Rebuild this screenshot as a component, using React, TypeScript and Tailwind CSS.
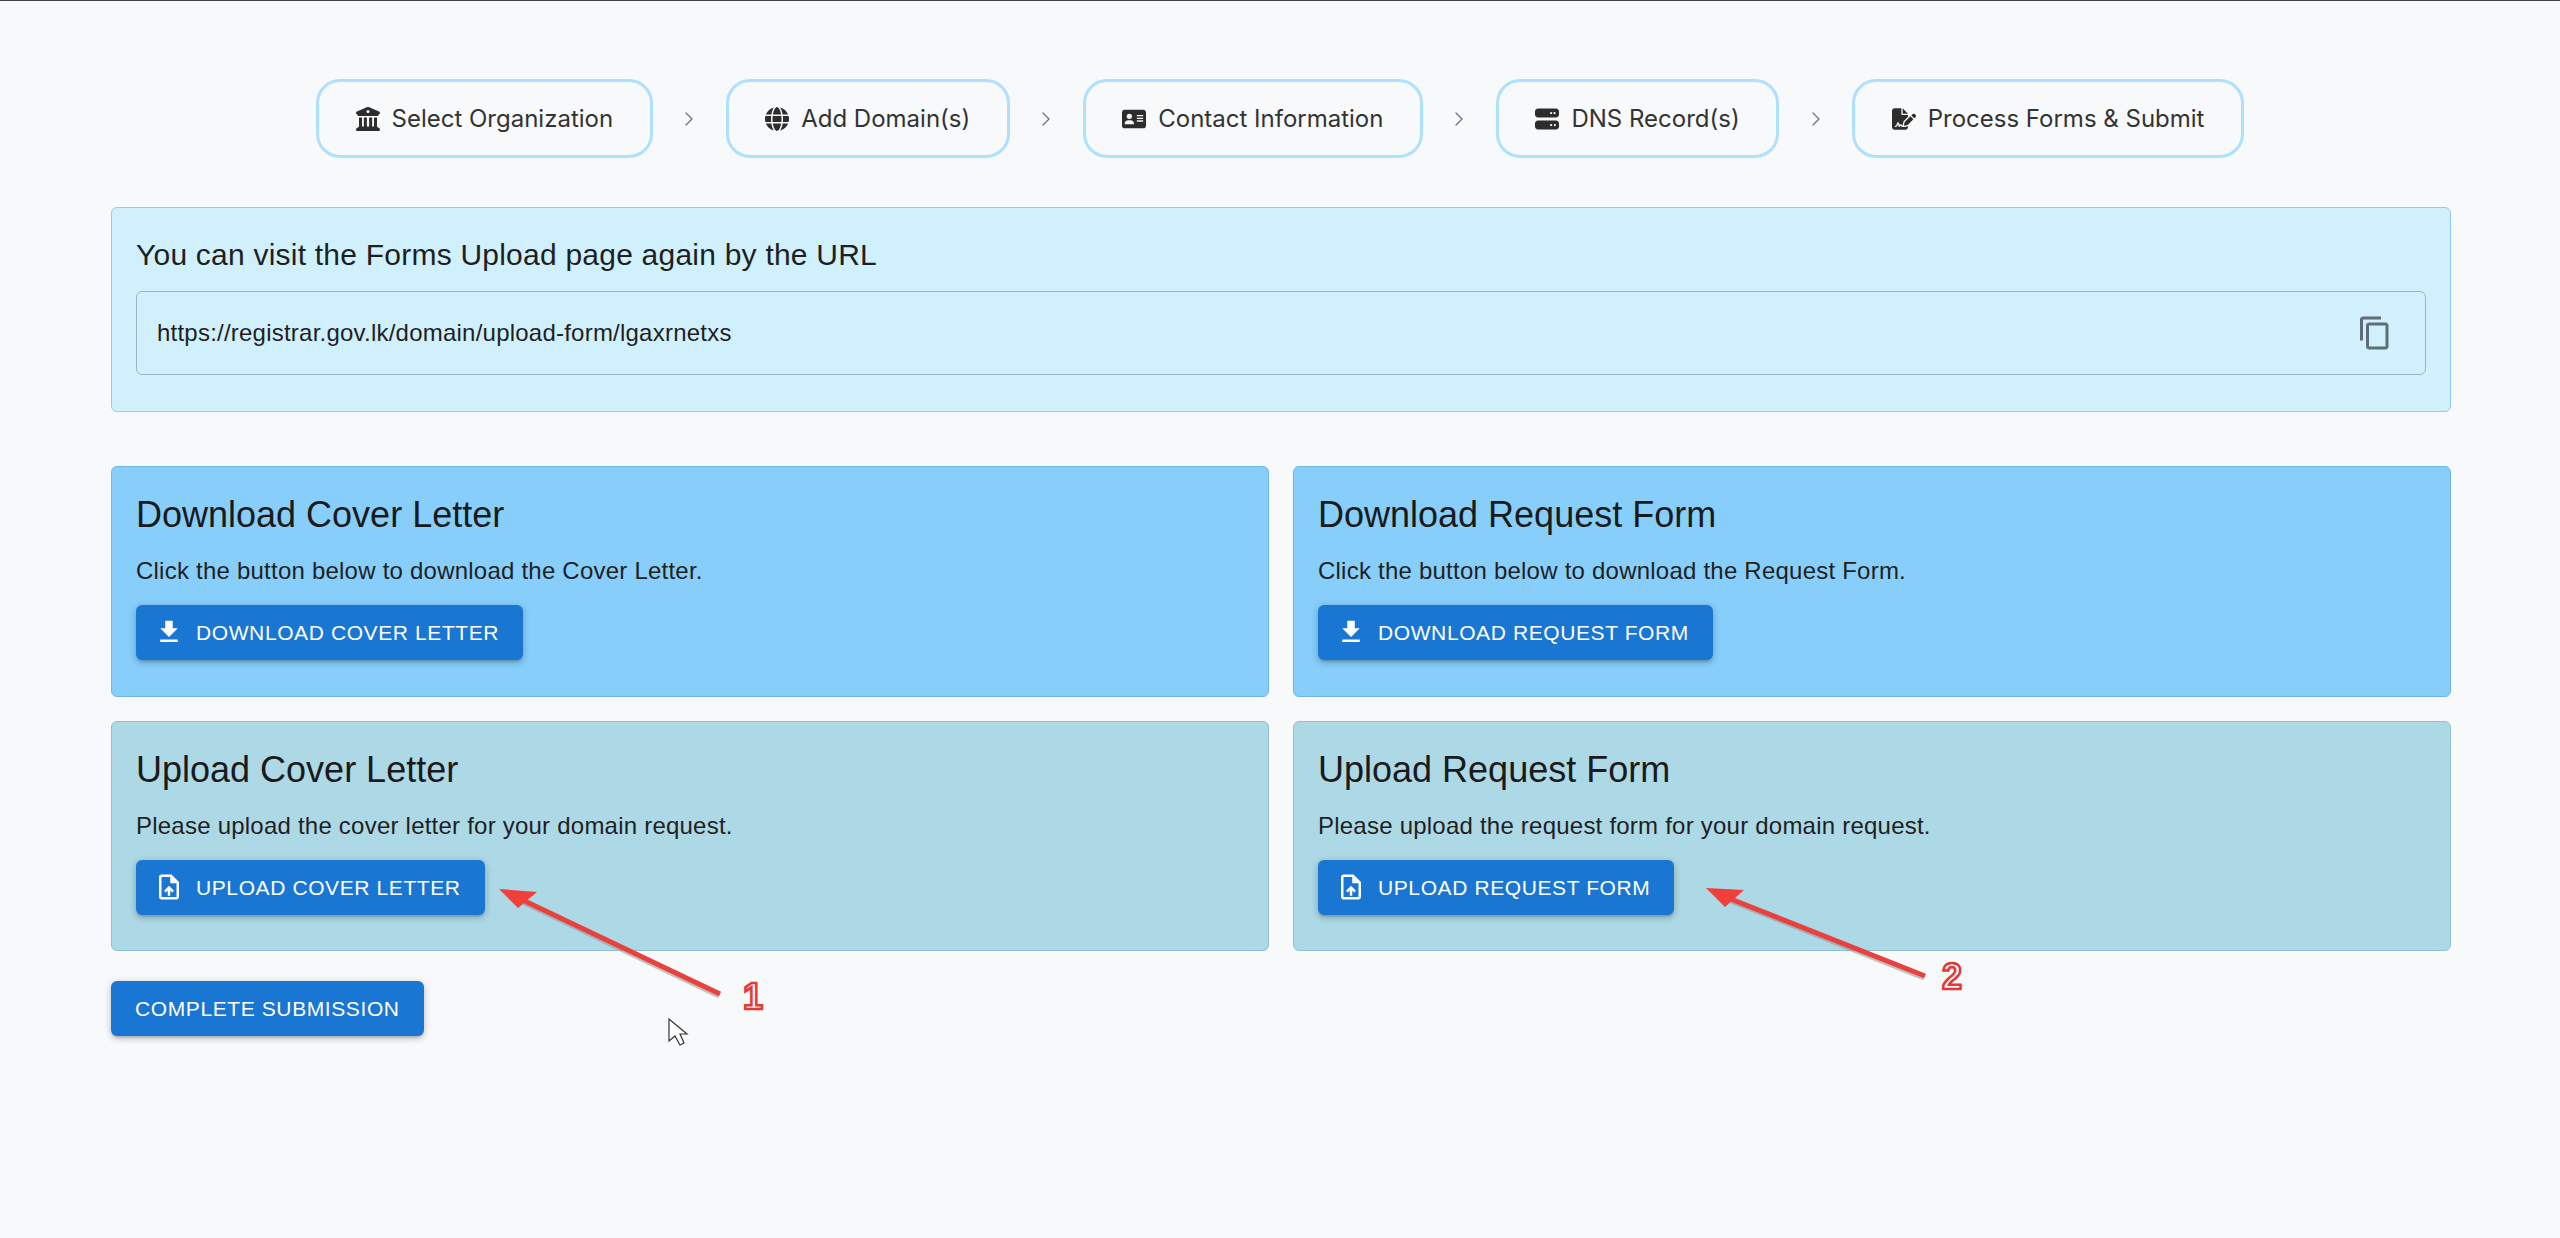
import { ChevronRight } from 'lucide-react';
import { FaAddressCard, FaBuildingColumns, FaFileSignature, FaGlobe, FaServer } from 'react-icons/fa6';
import { MdContentCopy, MdDownload, MdUploadFile } from 'react-icons/md';

const steps = [
  { name: 'Select Organization', icon: FaBuildingColumns },
  { name: 'Add Domain(s)', icon: FaGlobe },
  { name: 'Contact Information', icon: FaAddressCard },
  { name: 'DNS Record(s)', icon: FaServer },
  { name: 'Process Forms & Submit', icon: FaFileSignature },
];

const sans = "font-['Liberation_Sans',Arial,sans-serif]";

const buttonClass =
  'flex h-[54.75px] items-center rounded-[6px] bg-[#1976d2] text-[21px] tracking-[0.6px] text-white shadow-[0_3px_3px_-2px_rgba(0,0,0,0.2),0_3px_6px_0_rgba(0,0,0,0.14),0_1px_8px_0_rgba(0,0,0,0.12)]';

interface FormCardProps {
  title: string;
  text: string;
  label: string;
  tone: 'download' | 'upload';
}

const FormCard = ({ title, text, label, tone }: FormCardProps) => {
  const Icon = tone === 'download' ? MdDownload : MdUploadFile;

  return (
    <div
      className={
        tone === 'download'
          ? 'h-[231px] rounded-[6px] border border-[#6fb7e8] bg-[#87cefa] px-6 pt-6'
          : 'h-[230px] rounded-[6px] border border-[#90c0d0] bg-[#add8e6] px-6 pt-6'
      }
    >
      <h2 className="text-[36px] leading-[47px] text-[#1a1a1a]">{title}</h2>
      <p className="mt-[14px] text-[24px] leading-[38px] tracking-[0.225px] text-[#1f1f1f]">{text}</p>
      <button className={`${buttonClass} mt-[15px] pl-[18px] pr-[24px]`}>
        <Icon className="mr-[12px] h-[30px] w-[30px]" />
        {label}
      </button>
    </div>
  );
};

const Annotations = () => (
  <>
    <svg className="pointer-events-none absolute left-0 top-0" width="2560" height="1238" fill="none">
      <path d="M719 995 L510 895" stroke="#9a9a9a" strokeOpacity="0.6" strokeWidth="5" />
      <path d="M720 993 L510 893" stroke="#e8413e" strokeWidth="5" />
      <path d="M499 888 L537 891 L518 907 Z" fill="#f0403c" />
      <path d="M1924 977 L1718 895" stroke="#9a9a9a" strokeOpacity="0.6" strokeWidth="5" />
      <path d="M1925 975 L1718 893" stroke="#e8413e" strokeWidth="5" />
      <path d="M1706 887 L1744 889 L1725 906 Z" fill="#f0403c" />
      <path
        d="M669 1018 L669 1040 L675 1035 L680 1044 L684 1042 L680 1033 L687 1033 Z"
        fill="#ffffff"
        stroke="#333333"
        strokeWidth="1.2"
      />
    </svg>
    <span className="absolute left-[743px] top-[976px] text-[36px] font-bold leading-[40px] text-[#f4f6f8] [-webkit-text-stroke:2.5px_#e53935]">
      1
    </span>
    <span className="absolute left-[1942px] top-[956px] text-[36px] font-bold leading-[40px] text-[#f4f6f8] [-webkit-text-stroke:2.5px_#e53935]">
      2
    </span>
  </>
);

export default function App() {
  return (
    <div className={`relative h-[1238px] w-[2560px] overflow-hidden border-t border-[#444444] bg-[#f8f9fb] ${sans}`}>
      {/* Stepper */}
      <nav className="mt-[78px] flex items-center justify-center font-['Inter',sans-serif]">
        {steps.map((step, index) => {
          const Icon = step.icon;
          return (
            <div key={step.name} className="flex items-center">
              {index > 0 && (
                <div className="flex w-[73px] justify-center">
                  <ChevronRight className="h-[24px] w-[24px] text-[#6b7280]" strokeWidth={1.25} />
                </div>
              )}
              <div className="flex h-[79px] items-center gap-[12px] rounded-[24px] border-[3px] border-[#aee0ff] px-[36.5px] text-[24px] text-[#333333]">
                <Icon className="h-[24px] w-auto text-[#2d2d2d]" />
                <span>{step.name}</span>
              </div>
            </div>
          );
        })}
      </nav>

      <main className="ml-[111px] mr-[109px] mt-[49px]">
        {/* Revisit URL */}
        <section className="h-[205px] rounded-[6px] border border-[#90caf9] bg-[#d0f0fe] px-6 pt-6">
          <p className="text-[30px] leading-[46px] tracking-[0.225px] text-[#1f1f1f]">
            You can visit the Forms Upload page again by the URL
          </p>
          <div className="mt-[13px] flex h-[84px] items-center justify-between rounded-[6px] border border-[#9db5c2] pl-5 pr-[32px]">
            <span className="text-[24px] tracking-[0.225px] text-[#1f1f1f]">
              https://registrar.gov.lk/domain/upload-form/lgaxrnetxs
            </span>
            <MdContentCopy className="h-[36px] w-[36px] text-[#5f6d75]" />
          </div>
        </section>

        {/* Forms */}
        <section className="mt-[54px] grid grid-cols-2 gap-x-6 gap-y-6">
          <FormCard
            tone="download"
            title="Download Cover Letter"
            text="Click the button below to download the Cover Letter."
            label="DOWNLOAD COVER LETTER"
          />
          <FormCard
            tone="download"
            title="Download Request Form"
            text="Click the button below to download the Request Form."
            label="DOWNLOAD REQUEST FORM"
          />
          <FormCard
            tone="upload"
            title="Upload Cover Letter"
            text="Please upload the cover letter for your domain request."
            label="UPLOAD COVER LETTER"
          />
          <FormCard
            tone="upload"
            title="Upload Request Form"
            text="Please upload the request form for your domain request."
            label="UPLOAD REQUEST FORM"
          />
        </section>

        <button className={`${buttonClass} mt-[30px] px-[24px]`}>COMPLETE SUBMISSION</button>
      </main>

      <Annotations />
    </div>
  );
}
